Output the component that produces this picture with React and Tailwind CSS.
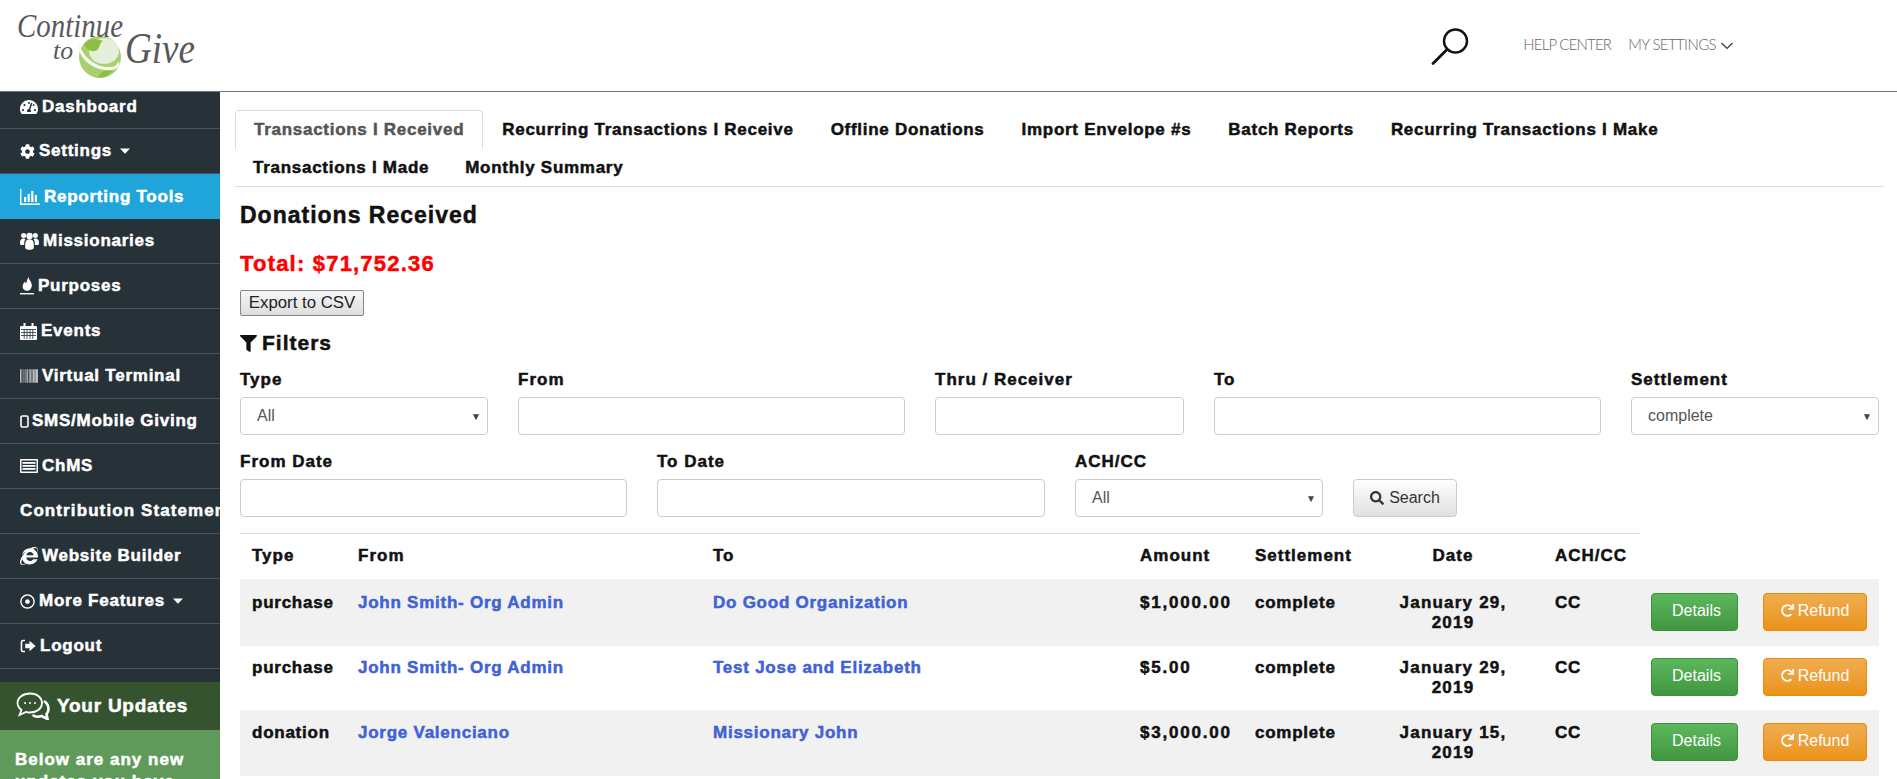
import {
  FaBarcode,
  FaCog,
  FaFilter,
  FaInternetExplorer,
  FaRedo,
  FaRegDotCircle,
  FaSearch,
  FaTachometerAlt,
} from "react-icons/fa";

const StatsIcon = () => (
  <svg width="20" height="16" viewBox="0 0 20 16" fill="white">
    <rect x="0" y="0" width="1.4" height="15" />
    <rect x="0" y="14.4" width="20" height="1.6" />
    <rect x="4" y="8" width="2.2" height="5" />
    <rect x="7.6" y="5" width="2.2" height="8" />
    <rect x="11.2" y="2" width="2.2" height="11" />
    <rect x="14.8" y="6" width="2.2" height="7" />
  </svg>
);

const UsersIcon = () => (
  <svg width="19" height="18" viewBox="0 0 19 18" fill="white">
    <circle cx="3.6" cy="3.6" r="2.5" />
    <circle cx="15.4" cy="3.6" r="2.5" />
    <circle cx="9.5" cy="4" r="3.2" />
    <path d="M0 11c0-3 1-4.600 3.600-4.600 1 0 1.600.2 2 .6-1 1-1.400 2.500-1.400 4.500 0 .5 0 1 .1 1.500H1c-.7-.3-1-1-1-2zM19 11c0-3-1-4.600-3.600-4.600-1 0-1.600.2-2 .6 1 1 1.400 2.500 1.400 4.500 0 .5 0 1-.1 1.500H18c.7-.3 1-1 1-2z" />
    <path d="M5.200 12.500c0-3.500 1.500-5.200 4.300-5.200s4.300 1.700 4.300 5.200v3.700c-1.200 1.100-2.700 1.600-4.300 1.600s-3.100-.5-4.300-1.600z" />
  </svg>
);

const FlameIcon = () => (
  <svg width="14" height="18" viewBox="0 0 14 18" fill="white">
    <path d="M8.500 0c.3 2.800 3.300 4.600 3.300 8.400 0 3-2 5.400-4.800 5.400-2.500 0-4.400-1.900-4.400-4.300 0-2.200 1.300-3.600 2.300-5 .4 1.100.8 1.700 1.400 2.100C6.400 4.400 7.400 2 8.500 0z" />
    <rect x="0" y="16" width="14" height="1.400" />
  </svg>
);

const CalendarIcon = () => (
  <svg width="17" height="17" viewBox="0 0 17 17" fill="white">
    <path d="M1 3h15a1 1 0 0 1 1 1v12a1 1 0 0 1-1 1H1a1 1 0 0 1-1-1V4a1 1 0 0 1 1-1z" />
    <rect x="3.500" y="0" width="2" height="4" />
    <rect x="11.500" y="0" width="2" height="4" />
    <path d="M1 6.500h15M1 9.500h15M1 12.500h15M4.200 6v10M7 6v10M10 6v10M12.800 6v10" stroke="#263138" strokeWidth=".8" />
  </svg>
);

const PhoneIcon = () => (
  <svg width="9" height="13" viewBox="0 0 9 13" fill="none" stroke="white" strokeWidth="1.6">
    <rect x="1" y="1" width="7" height="11" rx="1.4" />
  </svg>
);

const ListBoxIcon = () => (
  <svg width="18" height="14" viewBox="0 0 18 14" fill="white">
    <path d="M1 0h16a1 1 0 0 1 1 1v12a1 1 0 0 1-1 1H1a1 1 0 0 1-1-1V1a1 1 0 0 1 1-1zm.5 1.500v11h15v-11z" fillRule="evenodd" />
    <rect x="2.500" y="3" width="13" height="1.800" />
    <rect x="2.500" y="6" width="13" height="1.800" />
    <rect x="2.500" y="9" width="13" height="1.800" />
  </svg>
);

const LogoutIcon = () => (
  <svg width="16" height="14" viewBox="0 0 16 14" fill="none" stroke="white">
    <path d="M5 1.500H3A1.500 1.500 0 0 0 1.500 3v8A1.500 1.500 0 0 0 3 12.500h2" strokeWidth="1.600" />
    <path d="M9.500 1.800 15.600 7l-6.100 5.200V9.300H5.200V4.700h4.300z" fill="white" stroke="none" />
  </svg>
);

const Caret = () => (
  <svg className="ml-[4px]" width="10" height="6" viewBox="0 0 10 6" fill="white">
    <path d="M0 .5h10L5 5.700z" />
  </svg>
);

const sideItems = [
  { label: "Dashboard", icon: <FaTachometerAlt size={18} />, gap: "gap-[4px]", height: "h-[37px] pb-[7px]" },
  { label: "Settings", icon: <FaCog size={15} />, caret: true, gap: "gap-[4px]" },
  { label: "Reporting Tools", icon: <StatsIcon />, gap: "gap-[4px]", active: true },
  { label: "Missionaries", icon: <UsersIcon />, gap: "gap-[4px]" },
  { label: "Purposes", icon: <FlameIcon />, gap: "gap-[4px]" },
  { label: "Events", icon: <CalendarIcon />, gap: "gap-[4px]" },
  { label: "Virtual Terminal", icon: <FaBarcode size={18} />, gap: "gap-[4px]" },
  { label: "SMS/Mobile Giving", icon: <PhoneIcon />, gap: "gap-[3px]" },
  { label: "ChMS", icon: <ListBoxIcon />, gap: "gap-[4px]" },
  { label: "Contribution Statements", gap: "gap-0", wide: true },
  { label: "Website Builder", icon: <FaInternetExplorer size={18} />, gap: "gap-[4px]" },
  { label: "More Features", icon: <FaRegDotCircle size={15} />, caret: true, gap: "gap-[4px]" },
  { label: "Logout", icon: <LogoutIcon />, gap: "gap-[4px]" },
];

const topTabs = [
  "Recurring Transactions I Receive",
  "Offline Donations",
  "Import Envelope #s",
  "Batch Reports",
  "Recurring Transactions I Make",
];

const rows = [
  { type: "purchase", from: "John Smith- Org Admin", to: "Do Good Organization", amount: "$1,000.00", date: "January 29, 2019", height: "h-[67px]", bg: "bg-[#f1f1f1]", pad: "pt-[14px]" },
  { type: "purchase", from: "John Smith- Org Admin", to: "Test Jose and Elizabeth", amount: "$5.00", date: "January 29, 2019", height: "h-[64px]", bg: "bg-white", pad: "pt-[12px]" },
  { type: "donation", from: "Jorge Valenciano", to: "Missionary John", amount: "$3,000.00", date: "January 15, 2019", height: "h-[66px]", bg: "bg-[#f1f1f1]", pad: "pt-[13px]" },
];

const heavy = "font-bold tracking-[0.75px] [-webkit-text-stroke:0.5px_currentColor]";
const heavyWide = "font-bold tracking-[1px] [-webkit-text-stroke:0.5px_currentColor]";
const heavyTabs = "font-bold tracking-[0.72px] [-webkit-text-stroke:0.5px_currentColor]";

const SearchGlass = () => (
  <svg width="40" height="38" viewBox="0 0 40 38" fill="none" stroke="#111">
    <circle cx="24.500" cy="14" r="11.500" strokeWidth="2.400" />
    <path d="M16 22.500 2 36.500" strokeWidth="2.800" strokeLinecap="round" />
  </svg>
);

const Logo = () => (
  <svg className="overflow-visible" width="186" height="70" viewBox="0 0 186 70" fill="#58595b" fontFamily="'Liberation Serif', serif" fontStyle="italic">
    <circle cx="86" cy="46" r="21" fill="#a9cf6f" />
    <ellipse cx="90" cy="40" rx="15" ry="13" fill="#e4eedb" />
    <path d="M70 33c3 6 8 9 13 6 3-2 2-7 6-9-7-3-15-2-19 3zM84 66c5 1 11-1 15-7-5-2-11 1-15 7z" fill="#8dbd45" />
    <path d="M65 32c-3 13 13 29 33 27 7-1 9-5 6-9 0 4-4 6-9 6-14 0-26-10-30-24z" fill="#f4f8ec" />
    <text x="3" y="26" fontSize="33" textLength="106" lengthAdjust="spacingAndGlyphs">Continue</text>
    <text x="39" y="48" fontSize="26" textLength="20" lengthAdjust="spacingAndGlyphs">to</text>
    <text x="111" y="52" fontSize="44" textLength="70" lengthAdjust="spacingAndGlyphs">Give</text>
  </svg>
);

const Select = ({ value }) => (
  <div className="flex h-[38px] items-center justify-between rounded-[4px] border border-[#ccc] bg-white pl-[16px] pr-[6px] text-[16px] text-[#555]">
    <span>{value}</span>
    <span className="text-[10px] text-[#444]">▼</span>
  </div>
);

const Field = ({ label, className, children }) => (
  <div className={className}>
    <div className={`mb-[7px] h-[20px] text-[17px] leading-[20px] text-[#111] ${heavyWide}`}>{label}</div>
    {children}
  </div>
);

const Input = () => <div className="h-[38px] rounded-[4px] border border-[#ccc] bg-white" />;

export default function App() {
  return (
    <div className="flex h-[779px] flex-col overflow-hidden bg-white font-['Liberation_Sans',Arial,sans-serif]">
      <header className="flex h-[92px] shrink-0 items-center border-b border-[#777] pl-[14px] pr-[164px]">
        <Logo />
        <div className="ml-auto flex items-center">
          <SearchGlass />
          <span className="mb-[2px] ml-[52px] font-['Lato',sans-serif] text-[15px] font-light tracking-[-0.8px] text-[#666]">HELP CENTER</span>
          <span className="mb-[2px] ml-[17px] font-['Lato',sans-serif] text-[15px] font-light tracking-[-0.6px] text-[#666]">MY SETTINGS</span>
          <svg className="ml-[5px]" width="12" height="8" viewBox="0 0 12 8" fill="none" stroke="#333" strokeWidth="1.200">
            <path d="M.5 1 6 6.500 11.500 1" />
          </svg>
        </div>
      </header>

      <div className="flex min-h-0 flex-1">
        <aside className="flex w-[220px] shrink-0 flex-col overflow-hidden bg-[#263138]">
          <nav>
            {sideItems.map((item) => (
              <div
                key={item.label}
                className={`flex items-center whitespace-nowrap pl-[20px] text-[17px] text-white ${heavy} ${item.gap} ${item.height || "h-[45px]"} ${item.active ? "bg-[#1fa5da]" : "border-b border-[#4a545b]"}`}
              >
                {item.icon}
                <span className={item.wide ? "tracking-[1.1px]" : ""}>{item.label}</span>
                {item.caret && <Caret />}
              </div>
            ))}
          </nav>
          <div className="mt-[13px] flex h-[48px] shrink-0 items-center gap-[7px] bg-[#35532f] pl-[16px] text-[19px] text-white">
            <svg width="34" height="28" viewBox="0 0 34 28" fill="none" stroke="white" strokeWidth="1.800">
              <path d="M14 1.500c7 0 12 4 12 9.500s-5 9.500-12 9.500c-1.500 0-3-.2-4-.6L3.500 23l2-5C3 16 1.500 13.700 1.500 11 1.500 5.500 7 1.500 14 1.500z" />
              <path d="M28 9c3 2 4.500 5 4.500 8 0 2-.8 4-2 5l1 5-6-3c-3 1-7 .5-9-1" strokeWidth="2.600" />
              <circle cx="9" cy="11" r="1" fill="white" stroke="none" />
              <circle cx="14" cy="11" r="1" fill="white" stroke="none" />
              <circle cx="19" cy="11" r="1" fill="white" stroke="none" />
            </svg>
            <span className={heavy}>Your Updates</span>
          </div>
          <div className={`h-[60px] bg-[#5f9a5b] pl-[15px] pt-[19px] text-[17px] leading-[22px] text-white ${heavyWide}`}>
            Below are any new
            <br />
            updates you have
          </div>
        </aside>

        <main className="min-w-0 flex-1 pl-[15px] pr-[13px] pt-[18px]">
          <div className={`border-b border-[#ddd] text-[17px] text-[#111] ${heavyTabs}`}>
            <div className="flex h-[39px]">
              <div className="flex h-[39px] items-center rounded-t-[4px] border border-b-0 border-[#ddd] px-[18px] text-[#555]">
                Transactions I Received
              </div>
              {topTabs.map((tab) => (
                <div key={tab} className="ml-[1px] flex items-center px-[18px]">
                  {tab}
                </div>
              ))}
            </div>
            <div className="flex h-[37px]">
              <div className="flex items-center px-[18px]">Transactions I Made</div>
              <div className="flex items-center px-[18px]">Monthly Summary</div>
            </div>
          </div>

          <div className="pl-[5px]">
            <h2 className={`mt-[14px] text-[23px] leading-[28px] text-[#111] ${heavyWide}`}>Donations Received</h2>
            <div className="mt-[21px] text-[22px] font-bold leading-[28px] tracking-[1.2px] text-[#f00] [-webkit-text-stroke:0.5px_currentColor]">Total: $71,752.36</div>
            <button className="mt-[12px] flex h-[26px] w-[124px] items-center justify-center rounded-[2px] border border-[#888] bg-linear-to-b from-[#f6f6f6] to-[#dedede] text-[16.800px] text-[#222]">
              Export to CSV
            </button>
            <div className="mt-[15px] flex h-[24px] items-center gap-[5px] text-[21px] font-bold tracking-[1px] text-[#111] [-webkit-text-stroke:0.5px_currentColor]">
              <FaFilter size={17} />
              <span>Filters</span>
            </div>

            <div className="mt-[15px] flex gap-[30px]">
              <Field label="Type" className="w-[248px]"><Select value="All" /></Field>
              <Field label="From" className="w-[387px]"><Input /></Field>
              <Field label="Thru / Receiver" className="w-[249px]"><Input /></Field>
              <Field label="To" className="w-[387px]"><Input /></Field>
              <Field label="Settlement" className="w-[248px]"><Select value="complete" /></Field>
            </div>
            <div className="mt-[17px] flex items-end gap-[30px]">
              <Field label="From Date" className="w-[387px]"><Input /></Field>
              <Field label="To Date" className="w-[388px]"><Input /></Field>
              <Field label="ACH/CC" className="w-[248px]"><Select value="All" /></Field>
              <button className="flex h-[38px] w-[104px] items-center justify-center gap-[5px] rounded-[4px] border border-[#ccc] bg-linear-to-b from-white to-[#e0e0e0] pb-[1px] text-[16px] text-[#333]">
                <FaSearch size={14} />
                Search
              </button>
            </div>

            <table className="mt-[16px] w-[1639px] table-fixed border-collapse text-[17px] leading-[20px] text-[#111]">
              <colgroup>
                <col className="w-[106px]" />
                <col className="w-[355px]" />
                <col className="w-[427px]" />
                <col className="w-[115px]" />
                <col className="w-[120px]" />
                <col className="w-[180px]" />
                <col className="w-[97px]" />
                <col className="w-[111px]" />
                <col className="w-[128px]" />
              </colgroup>
              <thead>
                <tr className={`h-[45px] ${heavyWide}`}>
                  {["Type", "From", "To", "Amount", "Settlement"].map((h) => (
                    <th key={h} className="border-t border-[#ddd] pl-[12px] text-left font-bold">{h}</th>
                  ))}
                  <th className="border-t border-[#ddd] text-center font-bold">Date</th>
                  <th className="border-t border-[#ddd] pl-[12px] text-left font-bold">ACH/CC</th>
                  <th />
                  <th />
                </tr>
              </thead>
              <tbody className={heavy}>
                {rows.map((row, i) => (
                  <tr key={i} className={`${row.height} ${row.bg}`}>
                    <td className={`pl-[12px] align-top ${row.pad}`}>{row.type}</td>
                    <td className={`pl-[12px] align-top text-[#3f62d4] ${row.pad}`}>{row.from}</td>
                    <td className={`pl-[12px] align-top text-[#3f62d4] ${row.pad}`}>{row.to}</td>
                    <td className={`pl-[12px] align-top tracking-[1.8px] ${row.pad}`}>{row.amount}</td>
                    <td className={`pl-[12px] align-top ${row.pad}`}>complete</td>
                    <td className={`px-[20px] text-center align-top tracking-[1.2px] ${row.pad}`}>{row.date}</td>
                    <td className={`pl-[12px] align-top ${row.pad}`}>CC</td>
                    <td className={`pl-[11px] align-top ${row.pad}`}>
                      <button className="flex h-[38px] w-[87px] items-center justify-center rounded-[4px] border border-[#3e8f3e] bg-linear-to-b from-[#5cb85c] to-[#419641] pb-[2px] pl-[4px] text-[16px] font-normal tracking-normal text-white [-webkit-text-stroke:0]">
                        Details
                      </button>
                    </td>
                    <td className={`pl-[12px] align-top ${row.pad}`}>
                      <button className="flex h-[38px] w-[104px] items-center justify-center gap-[4px] rounded-[4px] border border-[#e38d13] bg-linear-to-b from-[#f0ad4e] to-[#eb9316] pb-[2px] text-[16px] font-normal tracking-normal text-white [-webkit-text-stroke:0]">
                        <FaRedo size={13} />
                        Refund
                      </button>
                    </td>
                  </tr>
                ))}
              </tbody>
            </table>
          </div>
        </main>
      </div>
    </div>
  );
}
